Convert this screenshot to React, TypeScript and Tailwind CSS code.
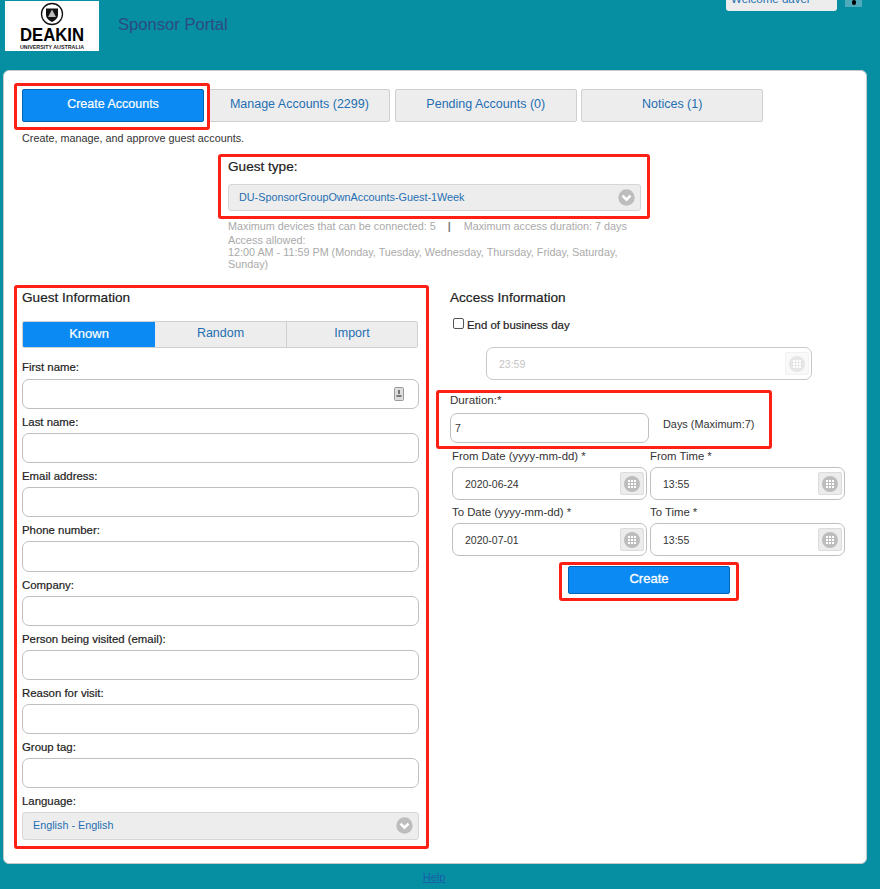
import React from 'react';

const FONT = "font-['Liberation_Sans',Arial,sans-serif]";

function RedBox({ className }: { className: string }) {
  return <div className={`absolute border-[3px] border-[#ff2015] rounded-[3px] pointer-events-none ${className}`} />;
}

function Chevron() {
  return (
    <svg width="17" height="17" viewBox="0 0 17 17" className="shrink-0">
      <circle cx="8.5" cy="8.5" r="8.2" fill="#bdbdbd" />
      <path d="M4.5 6.6 8.5 10.6 12.5 6.6" fill="none" stroke="#fff" strokeWidth="2.6" />
    </svg>
  );
}

function GridButton({ disabled }: { disabled?: boolean }) {
  return (
    <span className={`absolute right-[2px] top-[4px] flex h-[23px] w-[24px] items-center justify-center rounded-[2px] border ${disabled ? 'border-[#f2f2f2] bg-[#f9f9f9]' : 'border-[#dcdcdc] bg-[#ececec]'}`}>
      <svg width="16" height="16" viewBox="0 0 16 16">
        <circle cx="8" cy="8" r="8" fill={disabled ? '#e6e6e6' : '#bdbdbd'} />
        {[5, 8, 11].map((y) =>
          [5, 8, 11].map((x) => <rect key={`${x}-${y}`} x={x - 1} y={y - 1} width="2" height="2" fill="#fff" />),
        )}
      </svg>
    </span>
  );
}

function Tab({ label, active }: { label: string; active?: boolean }) {
  return active ? (
    <div className="flex h-[33px] w-[182px] items-center justify-center rounded-[2px] border border-[#0066b3] bg-[#0a8af2] pb-[3px] text-[12.5px] text-white [-webkit-text-stroke:0.2px_white]">
      {label}
    </div>
  ) : (
    <div className="flex h-[33px] w-[182px] items-center justify-center rounded-[2px] border border-[#cfcfcf] bg-[#ededed] pb-[3px] text-[12.5px] text-[#1f6fb2]">
      {label}
    </div>
  );
}

function Field({ label, h = 'h-[30px]', icon }: { label: string; h?: string; icon?: boolean }) {
  return (
    <div className="flex flex-col">
      <label className={`h-[12px] text-[11.4px] text-[#222] [-webkit-text-stroke:0.2px_#222] ${icon ? 'leading-[12px]' : 'leading-[14px]'}`}>{label}</label>
      <div className={`relative mt-[6px] w-[397px] rounded-[7px] border border-[#bfbfbf] bg-white ${h}`}>
        {icon && (
          <svg width="10" height="14" viewBox="0 0 10 14" className="absolute right-[14px] top-[7px]">
            <rect x="0.5" y="0.5" width="9" height="13" rx="1" fill="#dddddd" stroke="#9a9a9a" />
            <rect x="4" y="3" width="2" height="4" fill="#777" />
            <rect x="2.5" y="8" width="5" height="2" fill="#777" />
          </svg>
        )}
      </div>
    </div>
  );
}

function DateField({ label, value }: { label: string; value: string }) {
  return (
    <div className="w-[195px]">
      <div className="h-[12px] text-[11.35px] leading-[12px] text-[#333]">{label}</div>
      <div className="relative mt-[5px] flex h-[33px] items-center rounded-[7px] border border-[#bfbfbf] bg-white pl-[12px] pt-[2px] text-[10.5px] text-[#333]">
        {value}
        <GridButton />
      </div>
    </div>
  );
}

export default function App() {
  return (
    <div className={`relative h-[889px] w-[880px] overflow-hidden bg-[#068ea3] ${FONT}`}>
      {/* Header */}
      <header className="flex h-[70px] items-start">
        <div className="ml-[5px] mt-[1px] h-[50px] w-[94px] bg-white">
          <svg width="94" height="50" viewBox="0 0 94 50">
            <circle cx="47" cy="13" r="10.5" fill="#fff" stroke="#111" strokeWidth="1.3" />
            <path d="M41 7.5h12v6.5q0 4-6 7q-6-3-6-7z" fill="#111" />
            <path d="M47 8.5l4 7.5h-8z" fill="#bbb" />
            <text x="15" y="40" fontSize="19" fontWeight="700" fill="#000" textLength="64" lengthAdjust="spacingAndGlyphs">DEAKIN</text>
            <text x="15" y="48" fontSize="6" fontWeight="700" fill="#222" textLength="64" lengthAdjust="spacingAndGlyphs">UNIVERSITY AUSTRALIA</text>
          </svg>
        </div>
        <h1 className="ml-[19px] mt-[15px] text-[16.6px] leading-[20px] text-[#2c4b82]">Sponsor Portal</h1>
        <div className="ml-auto mt-[-10px] flex items-start">
          <div className="h-[21px] w-[111px] overflow-hidden rounded-[3px] bg-[#ededed] pl-[5px] pt-[3px] text-[11.5px] leading-[12px] text-[#1f6fb2]">Welcome davel</div>
          <div className="ml-[8px] mr-[18px] mt-[10px] flex h-[7px] w-[17px] items-start justify-center bg-[#4fabbb]">
            <span className="h-[5px] w-[4px] rounded-full bg-black" />
          </div>
        </div>
      </header>

      {/* Card */}
      <main className="ml-[3px] h-[794px] w-[864px] rounded-[6px] border border-[#c8c8c8] bg-white pl-[18px] pt-[18px]">
        <div className="flex gap-[4.4px]">
          <Tab label="Create Accounts" active />
          <Tab label="Manage Accounts (2299)" />
          <Tab label="Pending Accounts (0)" />
          <Tab label="Notices (1)" />
        </div>
        <p className="mt-[10px] text-[10.8px] leading-[12px] text-[#333]">Create, manage, and approve guest accounts.</p>

        {/* Guest type */}
        <section className="ml-[206px] mt-[15px] w-[413px]">
          <div className="text-[13.6px] leading-[15px] text-[#222] [-webkit-text-stroke:0.2px_#222]">Guest type:</div>
          <div className="mt-[10px] flex h-[27px] items-center justify-between rounded-[3px] border border-[#d6d6d6] bg-[#ededed] pl-[10px] pr-[5px] text-[10.8px] text-[#1f6fb2]">
            DU-SponsorGroupOwnAccounts-Guest-1Week
            <Chevron />
          </div>
          <div className="mt-[9px] text-[10.8px] leading-[12px] text-[#aaa]">
            Maximum devices that can be connected: 5 &nbsp; &nbsp;<span className="mr-[-2px] font-bold text-[#777]">|</span>&nbsp; &nbsp; &nbsp;Maximum access duration: 7 days
          </div>
          <div className="mt-[2px] text-[10.8px] leading-[12px] text-[#aaa]">
            Access allowed:
            <br />
            12:00 AM - 11:59 PM (Monday, Tuesday, Wednesday, Thursday, Friday, Saturday,
            <br />
            Sunday)
          </div>
        </section>

        <div className="mt-[21px] flex">
          {/* Guest information */}
          <section className="w-[428px]">
            <h2 className="text-[13.6px] leading-[14px] text-[#222] [-webkit-text-stroke:0.2px_#222]">Guest Information</h2>
            <div className="mt-[16px] flex h-[27px] w-[396px] overflow-hidden rounded-[2px] border border-[#d0d0d0] text-[12.5px]">
              <div className="flex w-[132px] items-center justify-center bg-[#0a8af2] pb-[2px] text-[13px] text-white [-webkit-text-stroke:0.2px_white]">Known</div>
              <div className="flex w-[132px] items-center justify-center border-r border-[#d0d0d0] bg-[#ededed] pb-[2px] text-[#1f6fb2]">Random</div>
              <div className="flex flex-1 items-center justify-center bg-[#ededed] pb-[2px] text-[#1f6fb2]">Import</div>
            </div>
            <div className="mt-[13px] flex flex-col gap-[6px]">
              <Field label="First name:" icon />
              <Field label="Last name:" />
              <Field label="Email address:" />
              <Field label="Phone number:" h="h-[31px]" />
              <Field label="Company:" />
              <Field label="Person being visited (email):" />
              <Field label="Reason for visit:" />
              <Field label="Group tag:" />
              <div className="flex flex-col">
                <label className="h-[12px] text-[11.4px] leading-[14px] text-[#222] [-webkit-text-stroke:0.2px_#222]">Language:</label>
                <div className="mt-[6px] flex h-[28px] w-[397px] items-center justify-between rounded-[3px] border border-[#d6d6d6] bg-[#ededed] pb-[1px] pl-[10px] pr-[5px] text-[10.8px] text-[#1f6fb2]">
                  English - English
                  <Chevron />
                </div>
              </div>
            </div>
          </section>

          {/* Access information */}
          <section className="w-[400px]">
            <h2 className="text-[13.6px] leading-[14px] text-[#222] [-webkit-text-stroke:0.2px_#222]">Access Information</h2>
            <label className="ml-[3px] mt-[13px] flex items-center gap-[1px] text-[11.4px] leading-[12px] text-[#222] [-webkit-text-stroke:0.2px_#222]">
              <span className="mb-[3px] inline-block h-[11px] w-[11px] rounded-[2px] border border-[#555] bg-white" />
              <span className="ml-[2px]">End of business day</span>
            </label>
            <div className="relative ml-[36px] mt-[15px] flex h-[33px] w-[326px] items-center rounded-[7px] border border-[#c8c8c8] pl-[12px] pt-[2px] text-[10.5px] text-[#c4c4c4]">
              23:59
              <GridButton disabled />
            </div>
            <div className="mt-[14px] text-[11.6px] leading-[12px] text-[#333]">Duration:*</div>
            <div className="mt-[7px] flex items-center">
              <div className="flex h-[30px] w-[199px] items-center rounded-[7px] border border-[#bfbfbf] pl-[4px] pt-[2px] text-[10.5px] text-[#333]">7</div>
              <span className="mb-[8px] ml-[14px] text-[10.9px] text-[#333]">Days (Maximum:7)</span>
            </div>
            <div className="ml-[2px] mt-[7px] grid w-[393px] grid-cols-[195px_195px] gap-x-[3px] gap-y-[6px]">
              <DateField label="From Date (yyyy-mm-dd) *" value="2020-06-24" />
              <DateField label="From Time *" value="13:55" />
              <DateField label="To Date (yyyy-mm-dd) *" value="2020-07-01" />
              <DateField label="To Time *" value="13:55" />
            </div>
            <div className="ml-[118px] mt-[10px] flex h-[28px] w-[162px] items-center justify-center rounded-[2px] border border-[#0066b3] bg-[#0a8af2] pb-[2px] text-[13px] text-white [-webkit-text-stroke:0.3px_white]">
              Create
            </div>
          </section>
        </div>
      </main>

      <footer className="pr-[12px] text-center">
        <a className="text-[11px] text-[#1a5fa8] underline">Help</a>
      </footer>

      {/* annotation boxes over the page */}
      <RedBox className="left-[14px] top-[83px] h-[47px] w-[196px]" />
      <RedBox className="left-[218px] top-[154px] h-[65px] w-[432px]" />
      <RedBox className="left-[14px] top-[285px] h-[564px] w-[415px]" />
      <RedBox className="left-[436px] top-[390px] h-[59px] w-[336px]" />
      <RedBox className="left-[559px] top-[562px] h-[39px] w-[180px]" />
    </div>
  );
}
